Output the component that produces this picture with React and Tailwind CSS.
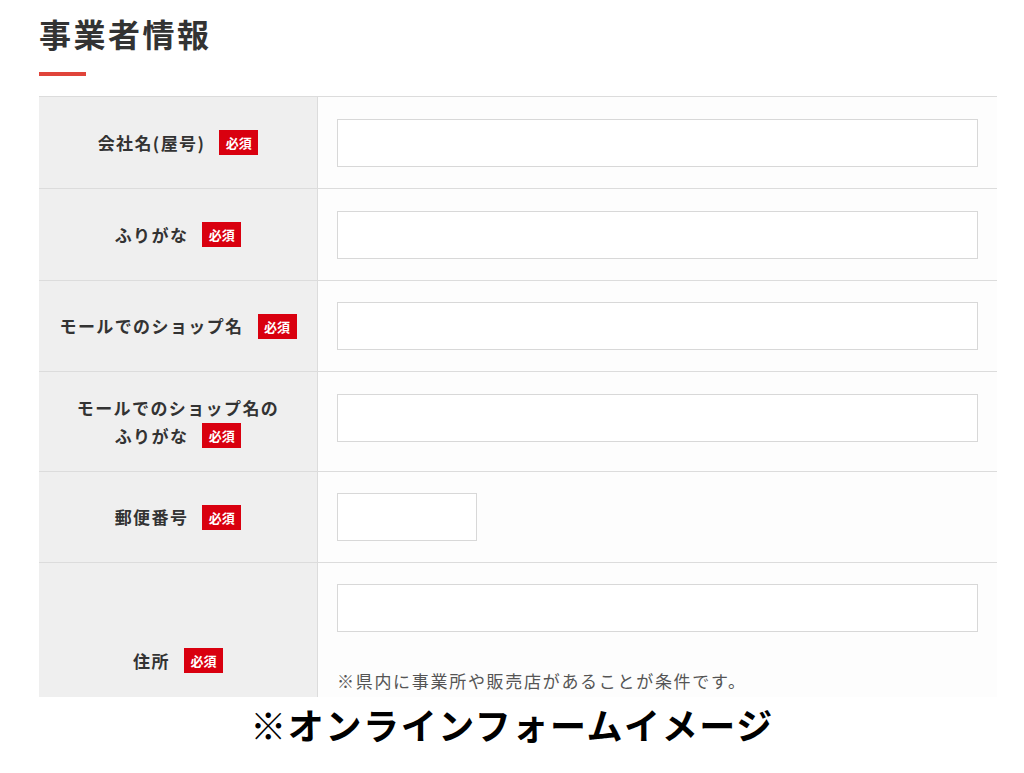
const font = { fontFamily: '"Noto Sans CJK JP", "Noto Sans", sans-serif' };

const Badge = () => (
  <span className="inline-flex items-center justify-center w-[39px] h-[25px] bg-[#d9000f] text-white text-[13px] font-bold leading-none ml-[14px] tracking-normal">
    必須
  </span>
);

const Input = ({ small }) => (
  <div
    className={`${small ? "w-[140px]" : "w-full"} h-[48px] bg-white border border-[#d8d8d8]`}
  />
);

const rows = [
  { label: "会社名(屋号)", h: "h-[92px]" },
  { label: "ふりがな", h: "h-[92px]" },
  { label: "モールでのショップ名", h: "h-[91px]" },
  { label: "モールでのショップ名の", label2: "ふりがな", h: "h-[100px]", lift: true },
  { label: "郵便番号", h: "h-[91px]", small: true },
];

export default function App() {
  return (
    <div className="w-[1024px] h-[773px] bg-white overflow-hidden text-[#333]" style={font}>
      <div className="px-[39px] pt-[17px]">
        <h1 className="text-[32px] leading-none font-bold tracking-[2.5px] text-[#333]">事業者情報</h1>
        <div className="mt-[23px] w-[47px] h-[4px] bg-[#e0443a]" />

        {/* form table, cropped at the bottom */}
        <div className="mt-[20px] w-[958px] h-[601px] overflow-hidden">
          {rows.map((r, i) => (
            <div key={i} className={`flex border-t border-[#dcdcdc] ${r.h}`}>
              <div className="w-[279px] shrink-0 bg-[#efefef] border-r border-[#dcdcdc] flex flex-col items-center justify-center text-[17px] font-bold tracking-[1.4px] leading-[28px]">
                {r.label2 ? (
                  <>
                    <div>{r.label}</div>
                    <div className="flex items-center">
                      {r.label2}
                      <Badge />
                    </div>
                  </>
                ) : (
                  <div className="flex items-center">
                    {r.label}
                    <Badge />
                  </div>
                )}
              </div>
              <div className={`flex-1 flex items-center px-[19px] bg-[#fdfdfd] ${r.lift ? "pb-[8px]" : ""}`}>
                <Input small={r.small} />
              </div>
            </div>
          ))}
          <div className="flex border-t border-[#dcdcdc] h-[196px]">
            <div className="w-[279px] shrink-0 bg-[#efefef] border-r border-[#dcdcdc] flex items-center justify-center text-[17px] font-bold tracking-[1.4px]">
              <div className="flex items-center">
                住所
                <Badge />
              </div>
            </div>
            <div className="flex-1 flex flex-col px-[19px] pt-[21px] bg-[#fdfdfd]">
              <Input />
              <p className="mt-[40px] text-[17px] tracking-[1.7px] text-[#555] leading-none">
                ※県内に事業所や販売店があることが条件です。
              </p>
            </div>
          </div>
        </div>
      </div>

      <p className="mt-[9px] text-center text-[36px] font-bold tracking-[1.6px] leading-none text-black">
        ※オンラインフォームイメージ
      </p>
    </div>
  );
}
